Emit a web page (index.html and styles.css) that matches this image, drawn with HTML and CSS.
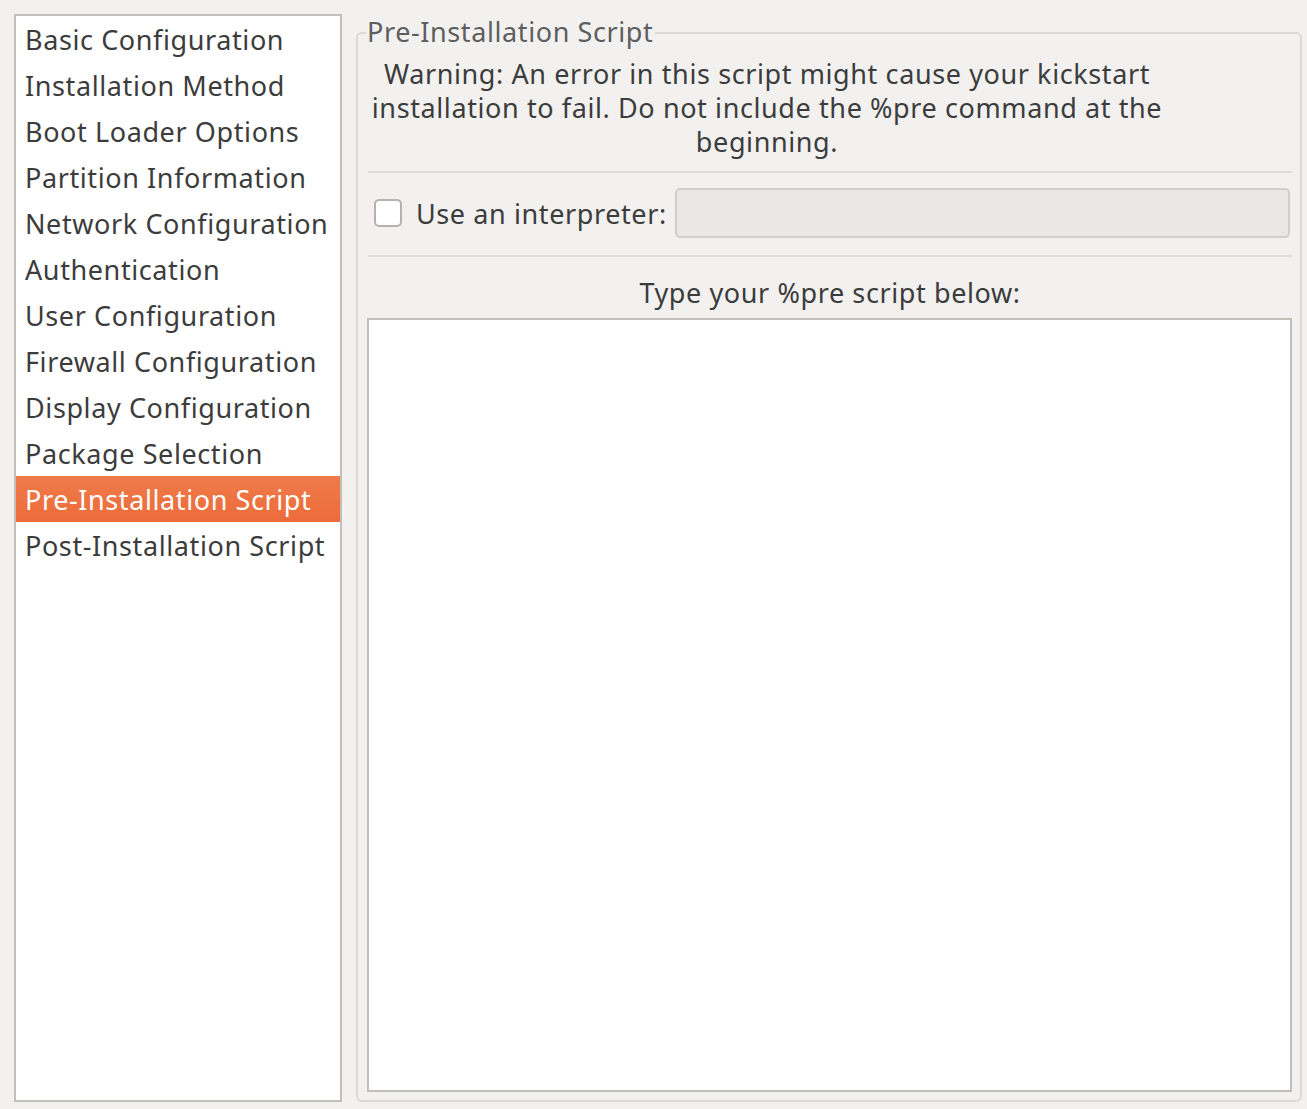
FILE: index.html
```html
<!DOCTYPE html>
<html>
<head>
<meta charset="utf-8">
<link rel="stylesheet" href="styles.css">
</head>
<body>
<div class="app">
  <ul class="nav">
    <li>Basic Configuration</li>
    <li>Installation Method</li>
    <li>Boot Loader Options</li>
    <li>Partition Information</li>
    <li>Network Configuration</li>
    <li>Authentication</li>
    <li>User Configuration</li>
    <li>Firewall Configuration</li>
    <li>Display Configuration</li>
    <li>Package Selection</li>
    <li class="active">Pre-Installation Script</li>
    <li>Post-Installation Script</li>
  </ul>
  <div class="frame">
    <div class="legend">Pre-Installation Script</div>
    <div class="warning">Warning: An error in this script might cause your kickstart installation to fail. Do not include the %pre command at the beginning.</div>
    <div class="sep"></div>
    <div class="interp">
      <span class="check"></span>
      <span class="interp-label">Use an interpreter:</span>
      <div class="entry"></div>
    </div>
    <div class="sep"></div>
    <div class="type-label">Type your %pre script below:</div>
    <div class="script"></div>
  </div>
</div>
</body>
</html>
```

FILE: styles.css
```css
html, body {
  margin: 0;
  padding: 0;
  background: #f2f1f0;
}
body {
  font-family: "Noto Sans", "DejaVu Sans", sans-serif;
  color: #3c3c3c;
  font-size: 27px;
  letter-spacing: 0.6px;
}
.app {
  display: flex;
  padding: 14px 5px 7px 14px;
  gap: 14px;
  height: 1109px;
  box-sizing: border-box;
}
.nav {
  list-style: none;
  margin: 0;
  padding: 0;
  width: 324px;
  border: 2px solid #c2bfb9;
  background: #fff;
  flex: none;
}
.nav li {
  height: 46px;
  line-height: 46px;
  padding: 1px 0 0 9px;
  box-sizing: border-box;
  white-space: nowrap;
}
.nav li.active {
  background: linear-gradient(#f07a4a, #ec6c3a);
  color: #fff;
}
.frame {
  flex: 1;
  margin-top: 18px;
  border: 2px solid #dcdad6;
  border-radius: 6px;
  position: relative;
  padding: 23px 8px 8px 10px;
  display: flex;
  flex-direction: column;
}
.legend {
  position: absolute;
  top: -17px;
  left: 8px;
  background: #f2f1f0;
  padding: 0 2px 0 1px;
  color: #5e5e5e;
  line-height: 30px;
}
.warning {
  width: 798px;
  text-align: center;
  line-height: 34px;
}
.sep {
  height: 2px;
  background: #dedcd8;
  margin: 12px 0 0 0;
}
.interp {
  display: flex;
  align-items: center;
  height: 50px;
  margin-top: 15px;
  margin-bottom: 17px;
}
.check {
  width: 24px;
  height: 24px;
  border: 2px solid #b5b2ad;
  border-radius: 5px;
  background: #fff;
  margin-left: 6px;
  flex: none;
}
.interp-label {
  margin-left: 14px;
  margin-right: 8px;
  white-space: nowrap;
}
.entry {
  flex: 1;
  height: 46px;
  border: 2px solid #d2cfcb;
  border-radius: 5px;
  background: #e9e8e6;
  margin-right: 2px;
}
.interp + .sep {
  margin-top: 0;
}
.type-label {
  text-align: center;
  line-height: 34px;
  margin-top: 19px;
  margin-bottom: 8px;
}
.script {
  flex: 1;
  background: #fff;
  border: 2px solid #c2bfb9;
  margin-left: -1px;
}
```
